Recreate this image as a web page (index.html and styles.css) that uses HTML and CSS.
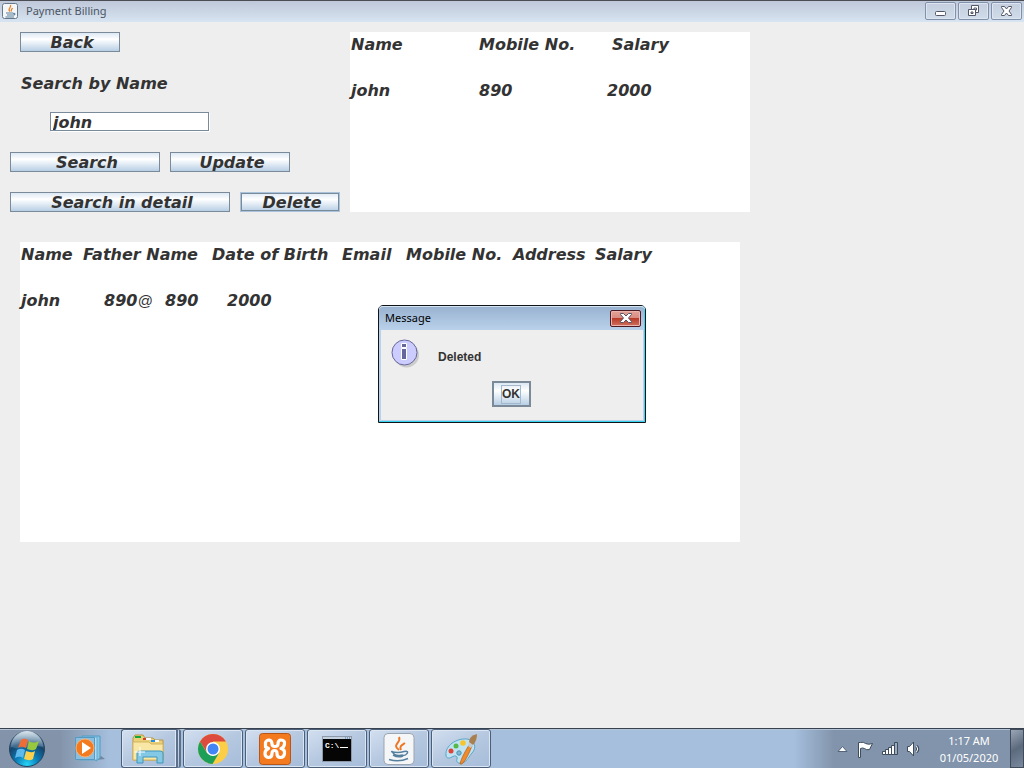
FILE: index.html
```html
<!DOCTYPE html>
<html lang="en">
<head>
<meta charset="utf-8">
<title>Payment Billing</title>
<link rel="stylesheet" href="styles.css">
</head>
<body>
<div class="desktop">
  <header class="titlebar">
    <svg class="app-icon" width="16" height="16" viewBox="0 0 16 16" fill="none">
      <rect x=".5" y=".5" width="15" height="15" rx="2" fill="#f4f6f8" stroke="#66788c"/>
      <path d="M8 8.500C5 6 9.500 5 8.500 2M9.500 8.500C8.500 7 10 6 10.500 5" stroke="#e8842c" stroke-width="1.300"/>
      <path d="M4 10h7M5 12h6M3.500 14h8.500M11 10.500c3-1 2 2 0 1.500" stroke="#5b7f9c" stroke-width="1.100"/>
    </svg>
    <h1 class="title">Payment Billing</h1>
    <div class="controls">
      <button class="control" type="button" aria-label="Minimize"><svg width="13" height="12" viewBox="0 0 13 12"><rect x="1.500" y="6.500" width="10" height="4" rx="1" fill="#fff" stroke="#535666"/></svg></button>
      <button class="control" type="button" aria-label="Restore"><svg width="13" height="12" viewBox="0 0 13 12" fill="#fff" stroke="#535666"><path d="M4.500.500h7v7h-7z"/><path d="M7 3h2.500v2H7z"/><path d="M1.500 4.500h7v6h-7z"/><path d="M4 7h2v1.500H4z" fill="#c5d2e2"/></svg></button>
      <button class="control" type="button" aria-label="Close"><svg width="13" height="12" viewBox="0 0 13 12"><path d="M1.500 1.500h3l2 2.500 2-2.500h3v1L9 6l2.500 3.500v1h-3l-2-2.500-2 2.500h-3v-1L4 6 1.500 2.500z" fill="#fff" stroke="#535666"/></svg></button>
    </div>
  </header>

  <main class="content">
    <section class="top">
      <form class="actions">
        <div class="line inset"><button class="btn w100" type="button">Back</button></div>
        <div class="line inset"><label class="label" for="name">Search by Name</label></div>
        <div class="line field-line"><input class="field" id="name" type="text" value="john"></div>
        <div class="line"><button class="btn w150" type="button">Search</button><button class="btn w120" type="button">Update</button></div>
        <div class="line"><button class="btn w220" type="button">Search in detail</button><button class="btn w100 focused" type="button">Delete</button></div>
      </form>
      <div class="pane summary">
        <table class="records">
          <colgroup><col class="c128"><col class="c128"><col></colgroup>
          <tr><th>Name</th><th>Mobile No.</th><th class="indent-s">Salary</th></tr>
          <tr class="gap"><td colspan="3"></td></tr>
          <tr><td>john</td><td>890</td><td>2000</td></tr>
        </table>
      </div>
    </section>
    <section class="pane detail">
      <table class="records">
        <colgroup><col class="c62"><col class="c82"><col class="c47"><col class="c130"><col class="c64"><col class="c107"><col class="c82"><col></colgroup>
        <tr><th>Name</th><th colspan="2">Father Name</th><th>Date of Birth</th><th>Email</th><th>Mobile No.</th><th>Address</th><th>Salary</th></tr>
        <tr class="gap"><td colspan="8"></td></tr>
        <tr><td>john</td><td class="indent-l">890<span class="at">@</span></td><td>890</td><td class="indent-m">2000</td><td></td><td></td><td></td><td></td></tr>
      </table>
    </section>
  </main>

  <footer class="taskbar">
    <button class="start" type="button" aria-label="Start">
      <svg width="38" height="38" viewBox="0 0 38 38">
        <defs><radialGradient id="orb" cx=".5" cy=".95" r=".85"><stop offset="0" stop-color="#25d5f8"/><stop offset=".4" stop-color="#0a7bb6"/><stop offset=".75" stop-color="#16446c"/><stop offset="1" stop-color="#6f8da8"/></radialGradient>
        <linearGradient id="gloss" x2="0" y2="1"><stop offset="0" stop-color="#dce8ef"/><stop offset="1" stop-color="#7b9db8" stop-opacity=".3"/></linearGradient></defs>
        <circle cx="19" cy="19" r="17.500" fill="url(#orb)" stroke="#23435f"/>
        <path d="M3 17a16 16 0 0 1 32 0c-10-3-22 4-32 0z" fill="url(#gloss)"/>
        <path d="M13 10c3-2 5-1 7 0l-2 8c-3-1-5-2-8 0z" fill="#ee6c36"/>
        <path d="M21 11c3 2 6 2 10 0l-3 8c-3 2-6 1-9 0z" fill="#98c83e"/>
        <path d="M9 20c3-2 6-1 8 0l-2 8c-3-2-5-1-8 0z" fill="#5eb9ed"/>
        <path d="M18 21c3 1 6 2 9 0l-2 8c-3 2-6 1-9 0z" fill="#fcd04a"/>
      </svg>
    </button>
    <button class="pinned" type="button" aria-label="Media Player">
      <svg width="32" height="28" viewBox="0 0 32 28">
        <path d="M22 25l9-1-4-3z" fill="#71879f"/>
        <path d="M8 1h18v22l-4 3z" fill="#8fc5e4" stroke="#4d9ac4"/>
        <path d="M5 2h18v23H5z" fill="#b3dcf0" stroke="#5faad0"/>
        <path d="M1.500 2.500h19v22h-19z" fill="#8abfe0" stroke="#569ac2"/>
        <circle cx="11" cy="13" r="9" fill="#f47a20" stroke="#fbb070"/>
        <path d="M8 7l9 6-9 6z" fill="#fff"/>
      </svg>
    </button>
    <div class="tasks">
      <button class="task stacked" type="button" aria-label="Explorer">
        <svg width="34" height="32" viewBox="0 0 34 32">
          <path d="M2 5l2-3h8l2 3h8l2 2h8v20H2z" fill="#ecd078" stroke="#b99646"/>
          <path d="M4 3h6v2H4z" fill="#12a63b"/><path d="M12 5h8v2h-8z" fill="#fff"/><path d="M12 5h3v2h-3z" fill="#d63e2c"/><path d="M20 7h8v2h-8z" fill="#fff"/><path d="M20 7h4v2h-4z" fill="#1e8ee8"/>
          <path d="M2 9h16l2 2h12v16H2z" fill="#f9e8a5" stroke="#d3b661"/>
          <path d="M6 30V20q0-2 3-2h20q3 0 3 2v10h-6v-6H12v6z" fill="#83c9e6" stroke="#3f94bd"/>
          <path d="M9 14v9M4 19h10" stroke="#fff" stroke-width="1"/>
        </svg>
      </button>
      <button class="task" type="button" aria-label="Chrome">
        <svg width="32" height="32" viewBox="0 0 32 32">
          <circle cx="16" cy="16" r="15" fill="#fcce45"/>
          <path d="M16 16L3 8.500A15 15 0 0 1 29 8.500H16z" fill="#dd4b3e"/>
          <path d="M3 8.500h13v8l-6 3z" fill="#dd4b3e"/>
          <path d="M3 8.500L10 20l6 3 6-3-6.500 11A15 15 0 0 1 3 8.500z" fill="#1d9f58"/>
          <circle cx="16" cy="16" r="7" fill="#fff"/><circle cx="16" cy="16" r="5.500" fill="#4285f4"/>
        </svg>
      </button>
      <button class="task" type="button" aria-label="XAMPP">
        <svg width="32" height="32" viewBox="0 0 32 32">
          <rect x=".5" y=".5" width="31" height="31" rx="3" fill="#f47a20" stroke="#b65719"/>
          <path d="M6.500 9.500Q7.500 7 10 7q3 .5 3 4 0 2.500 3 2.500t3-2.500q0-4 3-4 4 0 3.500 4-.5 3.500-3.500 4.500 4 1 3.500 5-.5 4-4 4t-3.500-4q0-3-2.500-3T13 20.500q0 4-3.500 4-3.500-.5-3.500-4Q6 17 9.500 15.500L6.500 14z" fill="none" stroke="#fff" stroke-width="3.200" stroke-linecap="round" stroke-linejoin="round"/>
        </svg>
      </button>
      <button class="task" type="button" aria-label="Command Prompt">
        <svg width="30" height="26" viewBox="0 0 30 26">
          <path d="M.5.500h29v25H.5z" fill="#050505" stroke="#8d99a8"/><path d="M1 1h28v2H1z" fill="#c4d1df"/><path d="M23 2h1m1 0h1m1 0h1" stroke="#4870a0"/>
          <text class="prompt" x="3" y="12">C:\</text><path d="M18 11.500h8" stroke="#fff"/>
        </svg>
      </button>
      <button class="task" type="button" aria-label="Java">
        <svg width="32" height="32" viewBox="0 0 32 32" fill="none">
          <rect x="1" y=".5" width="30" height="31" rx="4" fill="#f5f6f7" stroke="#9ba5b0"/>
          <path d="M16 17C8 11 19 10 16 4M18 17c-2-4 1-5 4-7" stroke="#ed7625" stroke-width="2"/>
          <path d="M8 18.500q7 2 13 0M9 18q2 6 11 4M10 22q5 3 10 1M6 26.500q10 3 19-1M21 18.500q5-1 3 2-1 2-4 2" stroke="#557f9f" stroke-width="1.500"/>
        </svg>
      </button>
      <button class="task" type="button" aria-label="Paint">
        <svg width="32" height="32" viewBox="0 0 32 32">
          <path d="M1 22C0 13 11 5 22 6c8 1 10 9 5 14-3 3-4 8-10 10-5 1-6-2-5-4 1-3-2-4-5-2-4 2-6 1-6-2z" fill="#bfe3f3" stroke="#5aa6c6"/>
          <circle cx="6" cy="18" r="2.500" fill="#de4437"/><circle cx="11" cy="13" r="2.500" fill="#56b847"/><circle cx="18" cy="10" r="2.800" fill="#f7c52b"/><circle cx="14" cy="20" r="2.200" fill="#80b8d5" stroke="#4b91ae"/>
          <path d="M15 31q1-6 9-19l3 1q-5 13-10 18z" fill="#ef8b2b" stroke="#b45c19" stroke-width=".7"/>
          <path d="M24 9l4 3-2 3-3-2z" fill="#c5ccd0"/><path d="M24 9q0-6 8-8 0 7-4 11z" fill="#a97f50"/>
        </svg>
      </button>
    </div>
    <div class="tray">
      <svg width="11" height="6" viewBox="0 0 11 6" aria-label="Show hidden icons"><path d="M1 5.500h9l-4.500-5z" fill="#fff" stroke="#52657b"/></svg>
      <svg width="18" height="18" viewBox="0 0 18 18" aria-label="Action Center"><path d="M2.500 2.500h2q3-1 5 1 3 1.500 7 0l-3 6q-3 1-5-1-2-1-4 0v9h-2z" fill="#fff" stroke="#3f4c5c"/></svg>
      <svg width="16" height="13" viewBox="0 0 16 13" aria-label="Network"><path d="M.5 9.500h3v3h-3zM3.500 7.500h3v5h-3zM6.500 5.500h3v7h-3zM9.500 3.500h3v9h-3z" fill="#fff" stroke="#3f4c5c"/><path d="M12.500.5h3v12h-3z" fill="#9badbd" stroke="#3f4c5c"/></svg>
      <svg width="14" height="16" viewBox="0 0 14 16" aria-label="Volume"><path d="M1.500 5.500h2l4-4.500v14l-4-4.500h-2z" fill="#fff" stroke="#3f4c5c"/><path d="M10.500 5q2.500 3 0 6" fill="none" stroke="#3f4c5c" stroke-width="3"/><path d="M10.500 5q2.500 3 0 6" fill="none" stroke="#fff"/></svg>
      <div class="clock"><span>1:17 AM</span><span>01/05/2020</span></div>
    </div>
    <button class="peek" type="button" aria-label="Show desktop"></button>
  </footer>

  <div class="dialog" role="dialog" aria-labelledby="dialog-title">
    <div class="dialog-bar">
      <h2 class="dialog-title" id="dialog-title">Message</h2>
      <button class="dialog-close" type="button" aria-label="Close"><svg width="12" height="10" viewBox="0 0 12 10"><path d="M.5.500h3L6 3 8.500.5h3v1L8.500 5l3 3.500v1h-3L6 7 3.500 9.500h-3v-1l3-3.500-3-3.500z" fill="#fff" stroke="#5b5563"/></svg></button>
    </div>
    <div class="dialog-body">
      <div class="message">
        <svg width="30" height="30" viewBox="0 0 30 30">
          <circle cx="15.500" cy="16" r="12.500" fill="#a9a9a9" opacity=".5"/>
          <circle cx="13.500" cy="13.500" r="12.500" fill="#ccccff" stroke="#666699"/>
          <path d="M10.500 4.500h5v4h-5zM10.500 9.500h5v11h-5z" fill="#666699" stroke="#fff"/>
        </svg>
        <p class="message-text">Deleted</p>
      </div>
      <button class="ok" type="button"><span class="ok-text">OK</span></button>
    </div>
  </div>
</div>
</body>
</html>
```
FILE: styles.css
```css
* { box-sizing: border-box; }
body { margin: 0; }
button { padding: 0; font: inherit; color: inherit; }
svg { display: block; flex: none; }

.desktop {
  position: relative;
  display: flex;
  flex-direction: column;
  min-height: 100vh;
  background: #eeeeee;
  color: #333333;
  font-family: "Liberation Sans", Arial, sans-serif;
  font-size: 12px;
}

/* Window title bar */
.titlebar {
  display: flex;
  align-items: center;
  gap: 8px;
  height: 22px;
  padding: 0 2px 2px;
  border-top: 1px solid #4c4c54;
  background: linear-gradient(#bfc8d9, #d7e4f1);
}
.title {
  flex: 1;
  margin: 0;
  color: #4b5563;
  font: 400 11px/20px "Noto Sans", sans-serif;
}
.controls { display: flex; gap: 2px; }
.control {
  display: flex;
  align-items: center;
  justify-content: center;
  width: 31px;
  height: 18px;
  border: 1px solid #8291ab;
  border-radius: 2px;
  background: linear-gradient(#c4cede, #d0dcea);
  box-shadow: inset 0 0 0 1px #dde6f0;
}

/* Main form */
.content {
  flex: 1;
  display: flex;
  flex-direction: column;
  gap: 30px;
  padding: 10px 0;
  font: italic 700 16px/23px "DejaVu Sans", sans-serif;
}
.top { display: flex; }
.actions {
  display: flex;
  flex-direction: column;
  gap: 20px;
  width: 350px;
  padding-left: 10px;
}
.line { display: flex; gap: 10px; height: 20px; }
.inset { padding-left: 10px; }
.label { padding-left: 1px; }
.field-line { padding-left: 40px; }
.field {
  width: 159px;
  height: 19px;
  padding: 2px 2px 0;
  border: 1px solid #7a8a99;
  background: #ffffff;
  box-shadow: 1px 1px 0 #ffffff;
  color: inherit;
  font: inherit;
  line-height: 17px;
}
.btn {
  height: 20px;
  padding: 2px 0 0 4px;
  border: 1px solid #7a8a99;
  background: linear-gradient(#dde8f3, #ffffff 35%, #b8cfe5);
  line-height: 16px;
}
.focused { box-shadow: inset 0 0 0 1px #7a8a99; border-color: #a9c3dd; }
.w100 { width: 100px; }
.w120 { width: 120px; }
.w150 { width: 150px; }
.w220 { width: 220px; }

.pane { background: #ffffff; }
.summary { width: 400px; }
.detail { width: 720px; height: 300px; margin-left: 20px; }
.records {
  width: 100%;
  table-layout: fixed;
  border-collapse: collapse;
}
.records th, .records td {
  height: 23px;
  padding: 3px 0 0 1px;
  text-align: left;
  font-weight: inherit;
  line-height: 20px;
  white-space: nowrap;
}
.records .indent-s { padding-left: 6px; }
.records .indent-m { padding-left: 16px; }
.records .indent-l { padding-left: 22px; }
.at { font: italic 400 15px/16px "Liberation Sans", sans-serif; }
.c47 { width: 47px; }
.c62 { width: 62px; }
.c64 { width: 64px; }
.c82 { width: 82px; }
.c107 { width: 107px; }
.c128 { width: 128px; }
.c130 { width: 130px; }

/* Taskbar */
.taskbar {
  display: flex;
  height: 40px;
  border-top: 1px solid #38414f;
  box-shadow: inset 0 1px 0 #b3c4d6;
  background: linear-gradient(90deg, #8394aa 0, #8394aa 60px, #a5bfdd 110px, #a5bfdd calc(100% - 230px), #8294ab calc(100% - 190px), #8294ab);
}
.start, .pinned { border: 0; background: none; }
.start { width: 54px; padding-left: 8px; }
.pinned { display: flex; align-items: center; width: 67px; padding-left: 20px; }
.tasks { display: flex; gap: 2px; }
.task {
  display: flex;
  align-items: center;
  justify-content: center;
  width: 60px;
  height: 39px;
  border: 1px solid #4c5f78;
  border-radius: 3px;
  background: linear-gradient(150deg, #d3dff0, #b5c8e0 50%, #a6bcd9);
  box-shadow: inset 0 0 0 1px #dce6f2;
}
.stacked { padding-right: 2px; border-right: 5px double #5d708a; }
.prompt { fill: #ffffff; font: 700 8px "Liberation Mono", monospace; }
.tray { display: flex; align-items: center; gap: 8px; margin-left: auto; }
.clock {
  display: flex;
  flex-direction: column;
  width: 82px;
  color: #ffffff;
  font: 11px/17px "Noto Sans", sans-serif;
  text-align: center;
}
.peek {
  width: 14px;
  border: 1px solid #414c5b;
  background: linear-gradient(150deg, #99a6b7, #5c6a7d 50%, #7a899e);
}

/* Message dialog */
.dialog {
  position: absolute;
  top: 305px;
  left: 378px;
  width: 268px;
  border: 1px solid #101418;
  border-radius: 5px 5px 0 0;
  background: #eeeeee;
  box-shadow: inset -1px -1px 0 #35d3ee, inset 0 0 0 2px #b9d1ea;
}
.dialog-bar {
  display: flex;
  align-items: center;
  justify-content: space-between;
  height: 24px;
  padding: 0 4px 0 6px;
  border-radius: 4px 4px 0 0;
  background: linear-gradient(#98b1cf, #b9d1ea);
  box-shadow: inset 0 1px 0 #d5e2f0, inset -1px 0 0 #35d3ee;
}
.dialog-title {
  margin: 0;
  color: #000000;
  font: 400 11px/24px "Noto Sans", sans-serif;
}
.dialog-close {
  display: flex;
  align-items: center;
  justify-content: center;
  width: 31px;
  height: 17px;
  border: 1px solid #4c1a22;
  border-radius: 2px;
  background: linear-gradient(#e3a398, #d88b80 48%, #b83c28 50%, #d0705f);
  box-shadow: inset 0 0 0 1px #e9b5ac;
}
.dialog-body {
  display: flex;
  flex-direction: column;
  align-items: center;
  gap: 12px;
  padding: 9px 14px 15px 12px;
}
.message { display: flex; align-items: center; gap: 17px; width: 100%; }
.message-text { margin: 0; padding-top: 6px; font-weight: 700; }
.ok {
  display: flex;
  align-items: center;
  justify-content: center;
  width: 39px;
  height: 26px;
  border: 2px solid #7a8a99;
  background: linear-gradient(#dde8f3, #ffffff 35%, #b8cfe5);
  font-weight: 700;
}
.ok-text { border: 1px solid #a3b8cc; line-height: 17px; }
```
